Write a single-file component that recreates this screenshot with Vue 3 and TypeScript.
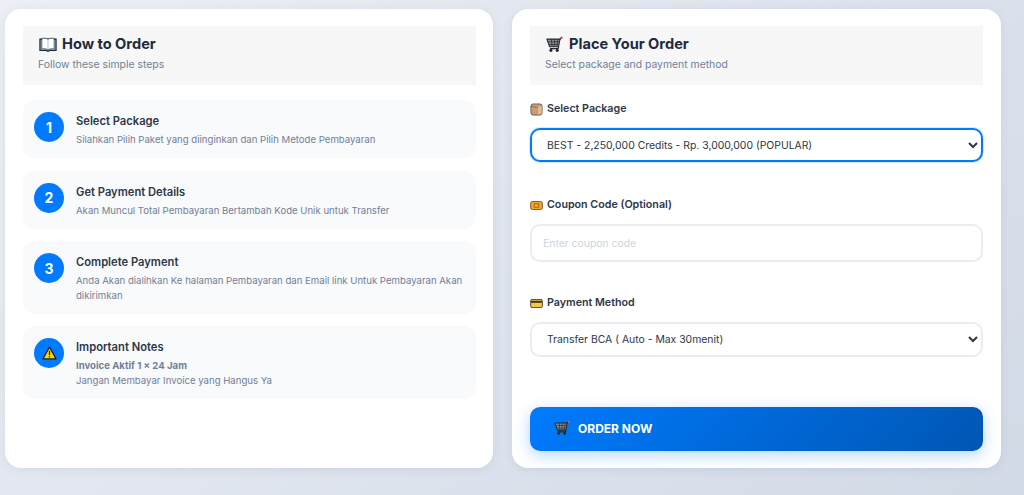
<template>
  <div class="page">
    <section class="card card-left">
      <header class="card-head">
        <h2>
          <svg class="head-icon book" viewBox="0 0 20 18" width="18" height="16">
            <path d="M1 2.500h18v12.500h-7l-2 1-2-1H1z" fill="#cfe3ee" stroke="#1d2b3a" stroke-width="1.500" />
            <path d="M3 1.600c3-.6 5.500-.3 7 1 1.500-1.300 4-1.600 7-1v11.900c-3-.4-5.500-.1-7 1-1.500-1.100-4-1.400-7-1z" fill="#fff" stroke="#26394a" stroke-width=".9" />
            <path d="M10 2.600v11.700" stroke="#9fb2bf" stroke-width=".8" />
          </svg>
          How to Order
        </h2>
        <p>Follow these simple steps</p>
      </header>

      <div class="steps">
        <div v-for="step in steps" :key="step.num" class="step">
          <span class="step-num">{{ step.num }}</span>
          <div class="step-body">
            <h3>{{ step.title }}</h3>
            <p>{{ step.text }}</p>
          </div>
        </div>

        <div class="step step-notes">
          <span class="step-num">
            <svg viewBox="0 0 16 15" width="15" height="14">
              <path d="M8 1.200 15 13.800H1z" fill="#ffd800" stroke="#1c1c1c" stroke-width="1.200" stroke-linejoin="round" />
              <path d="M8 5.200v4.600M8 10.900v1.300" stroke="#1c1c1c" stroke-width="1.400" />
            </svg>
          </span>
          <div class="step-body">
            <h3>Important Notes</h3>
            <p class="strong">Invoice Aktif 1 × 24 Jam</p>
            <p>Jangan Membayar Invoice yang Hangus Ya</p>
          </div>
        </div>
      </div>
    </section>

    <section class="card">
      <header class="card-head">
        <h2>
          <svg class="head-icon" viewBox="0 0 20 18" width="18" height="17">
            <use href="#cart-shape" />
          </svg>
          Place Your Order
        </h2>
        <p>Select package and payment method</p>
      </header>

      <form class="order-form" @submit.prevent>
        <div class="field">
          <label for="package">
            <svg viewBox="0 0 14 14" width="13" height="13">
              <rect x="1" y="1" width="12" height="12" rx="2.500" fill="#c99d76" stroke="#5c4a3c" stroke-width=".9" />
              <path d="M1.500 3.500 8 5v7.500" fill="none" stroke="#7a5c44" stroke-width=".8" />
              <path d="M8 5 12.500 3v8.500L8 12.500z" fill="#e0bb96" />
            </svg>
            Select Package
          </label>
          <select id="package" v-model="selectedPackage" class="control focused">
            <option v-for="p in packages" :key="p" :value="p">{{ p }}</option>
          </select>
        </div>

        <div class="field coupon">
          <label for="coupon">
            <svg viewBox="0 0 14 10" width="13" height="9">
              <rect x=".5" y=".5" width="13" height="9" rx="2" fill="#f0a52c" stroke="#6b5330" />
              <rect x="4.500" y="3" width="5" height="4" fill="none" stroke="#a8681a" />
            </svg>
            Coupon Code (Optional)
          </label>
          <input id="coupon" v-model="coupon" class="control text" type="text" placeholder="Enter coupon code" />
        </div>

        <div class="field payment">
          <label for="payment">
            <svg viewBox="0 0 14 10" width="13" height="9">
              <rect x=".5" y=".5" width="13" height="9" rx="1.500" fill="#f1c84a" stroke="#4a3d1e" />
              <rect x="1" y="2" width="12" height="2.200" fill="#3a3220" />
            </svg>
            Payment Method
          </label>
          <select id="payment" v-model="selectedPayment" class="control">
            <option value="bca">Transfer BCA ( Auto - Max 30menit)</option>
          </select>
        </div>

        <button class="order-btn" type="submit">
          <svg viewBox="0 0 20 18" width="17" height="16">
            <use href="#cart-shape" />
          </svg>
          ORDER NOW
        </button>
      </form>
    </section>

    <svg width="0" height="0" class="defs">
      <defs>
        <g id="cart-shape">
          <path d="M1 3h14.500l-1.500 8.500H4z" fill="#8d9296" stroke="#25292c" stroke-width="1.200" stroke-linejoin="round" />
          <path d="M2.500 6h12.500M3.400 9h11M6 3l.8 8.500M9.500 3v8.500M13 3l-.9 8.500" stroke="#25292c" stroke-width=".8" fill="none" />
          <path d="M14 11.500l-.5 2H4.500M15.300 4 16.500 1.500" stroke="#25292c" stroke-width="1.300" fill="none" />
          <circle cx="17.300" cy="1.500" r="1.300" fill="#e2574c" />
          <circle cx="5.500" cy="15.500" r="1.700" fill="#25292c" />
          <circle cx="12.500" cy="15.500" r="1.700" fill="#25292c" />
        </g>
      </defs>
    </svg>
  </div>
</template>

<script setup lang="ts">
import { ref } from "vue";

interface Step {
  num: number;
  title: string;
  text: string;
}

const steps: Step[] = [
  { num: 1, title: "Select Package", text: "Silahkan Pilih Paket yang diinginkan dan Pilih Metode Pembayaran" },
  { num: 2, title: "Get Payment Details", text: "Akan Muncul Total Pembayaran Bertambah Kode Unik untuk Transfer" },
  {
    num: 3,
    title: "Complete Payment",
    text: "Anda Akan dialihkan Ke halaman Pembayaran dan Email link Untuk Pembayaran Akan dikirimkan",
  },
];

const packages: string[] = ["BEST - 2,250,000 Credits - Rp. 3,000,000 (POPULAR)"];

const selectedPackage = ref<string>(packages[0]);
const selectedPayment = ref<string>("bca");
const coupon = ref<string>("");
</script>

<style>
html,
body {
  margin: 0;
  overflow: hidden;
}
</style>

<style scoped>
.page {
  box-sizing: border-box;
  height: 495px;
  padding: 9px 23px 27px 5px;
  display: grid;
  grid-template-columns: 488px 489px;
  gap: 19px;
  font-family: Inter, "Liberation Sans", sans-serif;
  background: linear-gradient(135deg, #eceff5 0%, #d2dae7 100%);
  color: #2d3748;
}

.card {
  background: #fff;
  border-radius: 16px;
  padding: 17px 18px;
  box-shadow: 0 2px 10px rgba(60, 80, 120, 0.1);
}

.card-left {
  padding-right: 17px;
}

.card-head {
  background: #f7f7f8;
  height: 59px;
  box-sizing: border-box;
  padding: 9px 15px 0;
  margin-bottom: 15px;
}

.card-head h2 {
  margin: 0;
  display: flex;
  align-items: center;
  gap: 5px;
  font-size: 14.6px;
  line-height: 19px;
  font-weight: 700;
  color: #1f2a3c;
}

.head-icon {
  margin-left: 1px;
}

.card-head p {
  margin: 4px 0 0;
  font-size: 10.4px;
  line-height: 13px;
  color: #718096;
}

.steps {
  display: flex;
  flex-direction: column;
  gap: 12.5px;
}

.step {
  display: flex;
  gap: 12px;
  padding: 12px 11px 11px;
  background: #f8fafc;
  border-radius: 12px;
}

.step-notes {
  margin-top: -1px;
}

.step-num {
  flex: none;
  width: 30px;
  height: 30px;
  border-radius: 50%;
  background: #007bff;
  color: #fff;
  display: flex;
  align-items: center;
  justify-content: center;
  font-size: 14px;
  font-weight: 700;
}

.step-body {
  padding-top: 1px;
}

.step h3 {
  margin: 0 0 3px;
  font-size: 11.2px;
  line-height: 16px;
  font-weight: 600;
  color: #2d3748;
}

.step p {
  margin: 0;
  font-size: 9.6px;
  line-height: 15px;
  color: #718096;
}

.step p.strong {
  font-weight: 700;
}

.order-form {
  display: flex;
  flex-direction: column;
  padding-top: 2px;
}

.field label {
  display: flex;
  align-items: center;
  gap: 4px;
  font-size: 10.7px;
  line-height: 14px;
  font-weight: 600;
  color: #2d3748;
  margin-bottom: 12px;
}

.coupon {
  margin-top: 36px;
}

.payment {
  margin-top: 34px;
}

.control {
  display: block;
  box-sizing: border-box;
  width: 100%;
  height: 35px;
  padding: 0 11px;
  border: 2px solid #e8ecf3;
  border-radius: 10px;
  background: #fff;
  font-family: inherit;
  font-size: 10.4px;
  color: #2d3748;
  outline: none;
}

.control.focused {
  height: 34px;
  border-color: #007bff;
  box-shadow: 0 0 0 1px rgba(0, 123, 255, 0.15);
}

.control.text {
  height: 38px;
}

.control.text::placeholder {
  color: #cbd5e0;
}

.order-btn {
  margin-top: 50px;
  height: 44px;
  border: none;
  border-radius: 10px;
  padding: 0 24px 2px;
  display: flex;
  align-items: center;
  gap: 7px;
  background: linear-gradient(135deg, #007bff 0%, #0056b3 100%);
  color: #fff;
  font-family: inherit;
  font-size: 12px;
  font-weight: 700;
  box-shadow: 0 4px 15px rgba(0, 123, 255, 0.3);
}

.defs {
  position: absolute;
}
</style>
